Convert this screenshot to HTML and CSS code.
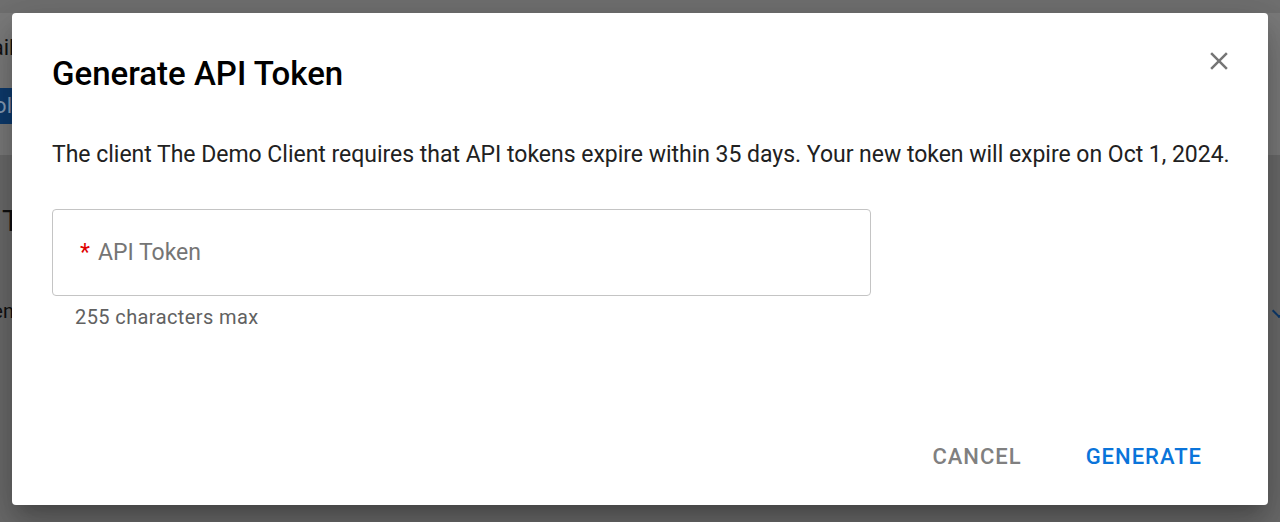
FILE: index.html
```html
<!DOCTYPE html>
<html lang="en">
<head>
<meta charset="utf-8">
<title>Generate API Token</title>
<link rel="stylesheet" href="styles.css">
</head>
<body>
<div class="page">
  <div class="bg-top">
    <div class="bg-label">Email</div>
    <div class="bg-btn">Tool</div>
  </div>
  <div class="bg-main">
    <div class="bg-heading">API T</div>
    <div class="bg-row">
      <span class="bg-row-text">Token</span>
      <span class="bg-chevron"></span>
    </div>
  </div>
</div>

<div class="dialog" role="dialog">
  <div class="dialog-header">
    <h2 class="dialog-title">Generate API Token</h2>
    <button class="close-btn" aria-label="Close">
      <svg width="30" height="30" viewBox="0 0 24 24"><path d="M19 6.41 17.59 5 12 10.59 6.41 5 5 6.41 10.59 12 5 17.59 6.41 19 12 13.41 17.59 19 19 17.59 13.41 12z" fill="#757575"/></svg>
    </button>
  </div>
  <p class="dialog-text">The client The Demo Client requires that API tokens expire within 35 days. Your new token will expire on Oct 1, 2024.</p>
  <div class="field">
    <div class="field-box">
      <span class="field-req">*</span><span class="field-label">API Token</span>
    </div>
    <div class="field-help">255 characters max</div>
  </div>
  <div class="dialog-actions">
    <button class="btn btn-cancel">Cancel</button>
    <button class="btn btn-primary">Generate</button>
  </div>
</div>
</body>
</html>
```

FILE: styles.css
```css
* { box-sizing: border-box; }
html, body {
  margin: 0;
  height: 100%;
  overflow: hidden;
}
body {
  font-family: Roboto, "Noto Sans", sans-serif;
  background: #6c6c6c;
  position: relative;
}
.page {
  display: flex;
  flex-direction: column;
  height: 100%;
}
.bg-top {
  height: 155px;
  background: #7b7b7b;
  border-top: 13px solid #707070;
  padding-top: 22px;
}
.bg-label {
  font-size: 22px;
  color: #111;
  margin-left: -40px;
  line-height: 26px;
}
.bg-btn {
  margin-top: 27px;
  height: 36px;
  width: 60px;
  margin-left: -40px;
  background: #0d3b6e;
  color: #8a9fb8;
  font-size: 22px;
  line-height: 36px;
  text-align: right;
  padding-right: 8px;
}
.bg-main {
  flex: 1;
  background: #6b6b6b;
  padding-top: 48px;
}
.bg-heading {
  font-size: 30px;
  color: #111;
  margin-left: -60px;
  width: 80px;
  text-align: right;
  line-height: 36px;
}
.bg-row {
  margin-top: 60px;
  display: flex;
  justify-content: space-between;
  align-items: center;
}
.bg-row-text {
  font-size: 20px;
  color: #111;
  margin-left: -40px;
}
.bg-chevron {
  width: 10px;
  height: 10px;
  border-right: 2px solid #0d3b6e;
  border-bottom: 2px solid #0d3b6e;
  transform: rotate(45deg);
  margin-right: -4px;
}

.dialog {
  position: absolute;
  left: 12px;
  top: 13px;
  width: 1256px;
  height: 492px;
  background: #fff;
  border-radius: 4px;
  box-shadow: 0 11px 15px -7px rgba(0,0,0,.2), 0 24px 38px 3px rgba(0,0,0,.14), 0 9px 46px 8px rgba(0,0,0,.12);
  padding: 41px 40px 0 40px;
  display: flex;
  flex-direction: column;
}
.dialog-header {
  display: flex;
  justify-content: space-between;
  align-items: flex-start;
}
.dialog-title {
  margin: 0;
  font-size: 33px;
  font-weight: 500;
  line-height: 40px;
  color: #000;
}
.close-btn {
  border: 0;
  background: none;
  padding: 0;
  margin: -8px -6px 0 0;
  width: 30px;
  height: 30px;
  cursor: pointer;
}
.close-btn svg { display: block; }
.dialog-text {
  margin: 46px 0 0 0;
  font-size: 23px;
  line-height: 30px;
  color: #212121;
  white-space: nowrap;
  letter-spacing: -0.02px;
}
.field {
  margin-top: 39px;
  width: 819px;
}
.field-box {
  height: 87px;
  border: 1px solid #c4c4c4;
  border-radius: 4px;
  display: flex;
  align-items: center;
  padding-left: 27px;
  font-size: 23px;
}
.field-req {
  color: #e00000;
  margin-right: 8px;
}
.field-label {
  color: #757575;
}
.field-help {
  margin: 9px 0 0 23px;
  font-size: 20px;
  color: #616161;
  letter-spacing: 0.4px;
}
.dialog-actions {
  margin-top: auto;
  margin-bottom: 25px;
  display: flex;
  justify-content: flex-end;
  gap: 48px;
  margin-right: 18px;
}
.btn {
  border: 0;
  background: none;
  font-family: inherit;
  font-size: 22px;
  font-weight: 500;
  text-transform: uppercase;
  letter-spacing: 1px;
  padding: 8px 8px;
  line-height: 30px;
  cursor: pointer;
}
.btn-cancel { color: #808080; }
.btn-primary { color: #0a74da; }
```
